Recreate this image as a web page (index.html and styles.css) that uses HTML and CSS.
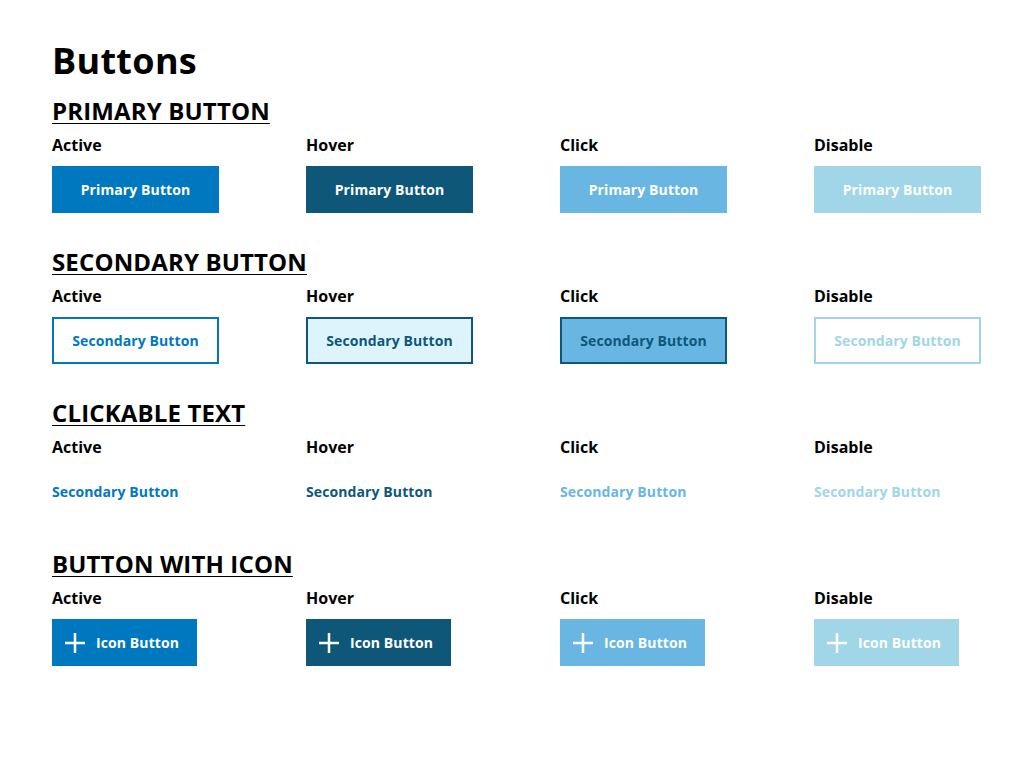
FILE: index.html
```html
<!DOCTYPE html>
<html lang="en">
<head>
    <meta charset="UTF-8">
    <meta name="viewport" content="width=device-width, initial-scale=1.0">
    <title>Buttons</title>
    <link rel="stylesheet" href="styles.css">
</head>
<body>

    <h1>Buttons</h1>

    <section class="group">
        <h2>Primary Button</h2>
        <div class="row">
            <div class="cell">
                <div class="state">Active</div>
                <button class="btn primary">Primary Button</button>
            </div>
            <div class="cell">
                <div class="state">Hover</div>
                <button class="btn primary hover">Primary Button</button>
            </div>
            <div class="cell">
                <div class="state">Click</div>
                <button class="btn primary click">Primary Button</button>
            </div>
            <div class="cell">
                <div class="state">Disable</div>
                <button class="btn primary disabled" disabled>Primary Button</button>
            </div>
        </div>
    </section>

    <section class="group">
        <h2>Secondary Button</h2>
        <div class="row">
            <div class="cell">
                <div class="state">Active</div>
                <button class="btn secondary">Secondary Button</button>
            </div>
            <div class="cell">
                <div class="state">Hover</div>
                <button class="btn secondary hover">Secondary Button</button>
            </div>
            <div class="cell">
                <div class="state">Click</div>
                <button class="btn secondary click">Secondary Button</button>
            </div>
            <div class="cell">
                <div class="state">Disable</div>
                <button class="btn secondary disabled" disabled>Secondary Button</button>
            </div>
        </div>
    </section>

    <section class="group">
        <h2>Clickable Text</h2>
        <div class="row">
            <div class="cell">
                <div class="state">Active</div>
                <a class="link" href="#">Secondary Button</a>
            </div>
            <div class="cell">
                <div class="state">Hover</div>
                <a class="link hover" href="#">Secondary Button</a>
            </div>
            <div class="cell">
                <div class="state">Click</div>
                <a class="link click" href="#">Secondary Button</a>
            </div>
            <div class="cell">
                <div class="state">Disable</div>
                <a class="link disabled">Secondary Button</a>
            </div>
        </div>
    </section>

    <section class="group">
        <h2>Button with Icon</h2>
        <div class="row">
            <div class="cell">
                <div class="state">Active</div>
                <button class="btn primary icon-btn">
                    <svg class="plus" viewBox="0 0 20 20"><path d="M10 0v20M0 10h20"/></svg>
                    Icon Button
                </button>
            </div>
            <div class="cell">
                <div class="state">Hover</div>
                <button class="btn primary icon-btn hover">
                    <svg class="plus" viewBox="0 0 20 20"><path d="M10 0v20M0 10h20"/></svg>
                    Icon Button
                </button>
            </div>
            <div class="cell">
                <div class="state">Click</div>
                <button class="btn primary icon-btn click">
                    <svg class="plus" viewBox="0 0 20 20"><path d="M10 0v20M0 10h20"/></svg>
                    Icon Button
                </button>
            </div>
            <div class="cell">
                <div class="state">Disable</div>
                <button class="btn primary icon-btn disabled" disabled>
                    <svg class="plus" viewBox="0 0 20 20"><path d="M10 0v20M0 10h20"/></svg>
                    Icon Button
                </button>
            </div>
        </div>
    </section>

</body>
</html>
```

FILE: styles.css
```css
body {
    margin: 0;
    padding: 39px 0 0 52px;
    font-family: "Open Sans", Arial, sans-serif;
    color: #000;
    background: #fff;
}
h1 {
    margin: 0 0 12px;
    font-size: 36px;
    line-height: 44px;
    font-weight: 700;
    letter-spacing: 0.3px;
}
.group {
    margin-bottom: 33px;
}
h2 {
    margin: 0 0 7px;
    font-size: 24px;
    line-height: 32px;
    font-weight: 700;
    letter-spacing: 0.15px;
    text-transform: uppercase;
    text-decoration: underline;
    text-decoration-thickness: 1px;
    text-underline-offset: 3px;
}
.row {
    display: grid;
    grid-template-columns: repeat(4, 254px);
}
.state {
    font-size: 16px;
    line-height: 22px;
    font-weight: 700;
    margin-bottom: 10px;
}
.btn {
    display: flex;
    align-items: center;
    justify-content: center;
    width: 167px;
    height: 47px;
    padding: 0;
    border: none;
    font-family: "Open Sans", Arial, sans-serif;
    font-size: 14px;
    font-weight: 700;
    letter-spacing: 0.1px;
    cursor: pointer;
}
.primary {
    background: #0078bf;
    color: #fff;
}
.primary.hover {
    background: #0e5779;
}
.primary.click {
    background: #69b6e3;
}
.primary.disabled {
    background: #a0d6e8;
    cursor: default;
}
.secondary {
    background: #fff;
    color: #0078bf;
    border: 2px solid #0078bf;
}
.secondary.hover {
    background: #ddf4fd;
    color: #0e5779;
    border-color: #0e5779;
}
.secondary.click {
    background: #69b6e3;
    color: #0e5779;
    border-color: #0e5779;
}
.secondary.disabled {
    color: #a0d6e8;
    border-color: #a0d6e8;
    cursor: default;
}
.link {
    display: flex;
    align-items: center;
    height: 47px;
    font-size: 14px;
    font-weight: 700;
    letter-spacing: 0.1px;
    color: #0078bf;
    text-decoration: none;
}
.link.hover {
    color: #0e5779;
}
.link.click {
    color: #69b6e3;
}
.link.disabled {
    color: #a0d6e8;
}
.icon-btn {
    width: 145px;
    justify-content: flex-start;
    padding-left: 13px;
    gap: 11px;
}
.plus {
    width: 20px;
    height: 20px;
    stroke: #fff;
    stroke-width: 2.5;
    fill: none;
}
```
